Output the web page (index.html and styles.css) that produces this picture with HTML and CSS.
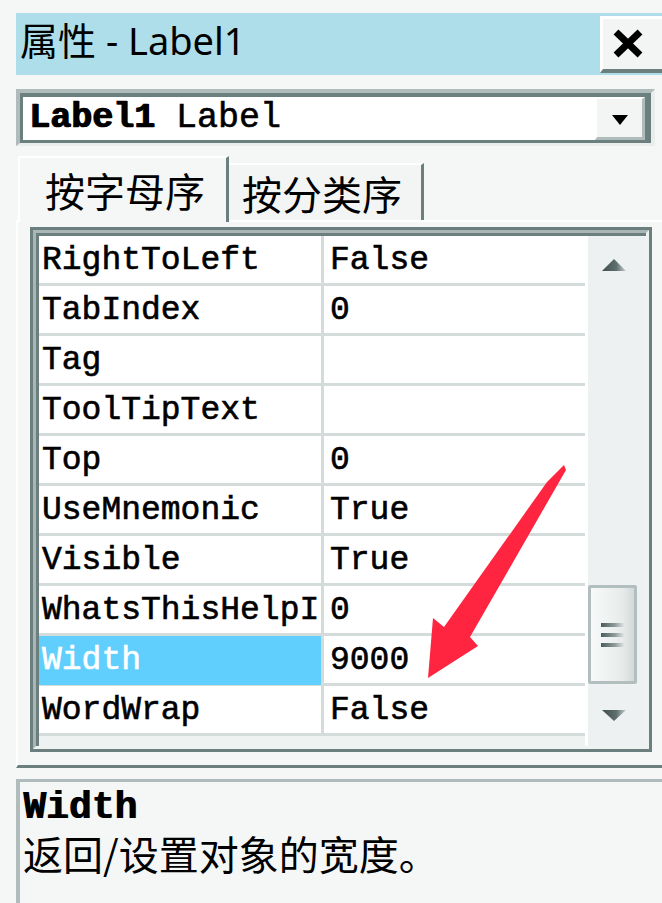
FILE: index.html
```html
<!DOCTYPE html>
<html>
<head>
<meta charset="utf-8">
<link rel="stylesheet" href="styles.css">
</head>
<body>
  <div class="window">
    <div class="titlebar">
      <span class="title">属性 - Label1</span>
      <div class="close">
        <svg width="32" height="31" viewBox="0 0 32 31"><path d="M4 4 L28 27 M28 4 L4 27" stroke="#000" stroke-width="7"/></svg>
      </div>
    </div>

    <div class="combo">
      <div class="combo-field">
        <span class="combo-text"><b>Label1</b> Label</span>
        <span class="combo-btn"><svg width="16" height="10" viewBox="0 0 16 10"><polygon points="0,0 16,0 8,10" fill="#000"/></svg></span>
      </div>
    </div>

    <div class="tabs">
      <div class="tab active">按字母序</div>
      <div class="tab">按分类序</div>
    </div>

    <div class="tabpage">
      <div class="grid-frame">
        <div class="grid-inner">
          <div class="rows">
            <div class="row"><div class="name">RightToLeft</div><div class="value">False</div></div>
            <div class="row"><div class="name">TabIndex</div><div class="value">0</div></div>
            <div class="row"><div class="name">Tag</div><div class="value"></div></div>
            <div class="row"><div class="name">ToolTipText</div><div class="value"></div></div>
            <div class="row"><div class="name">Top</div><div class="value">0</div></div>
            <div class="row"><div class="name">UseMnemonic</div><div class="value">True</div></div>
            <div class="row"><div class="name">Visible</div><div class="value">True</div></div>
            <div class="row"><div class="name">WhatsThisHelpID</div><div class="value">0</div></div>
            <div class="row selected"><div class="name">Width</div><div class="value">9000</div></div>
            <div class="row"><div class="name">WordWrap</div><div class="value">False</div></div>
          </div>
          <div class="scrollbar">
            <div class="sb-up">
              <svg width="24" height="12" viewBox="0 0 24 12"><polygon points="12,0 24,12 0,12" fill="url(#grey)"/></svg>
            </div>
            <div class="sb-space"></div>
            <div class="sb-thumb">
              <span class="grip"></span>
              <span class="grip"></span>
              <span class="grip"></span>
            </div>
            <div class="sb-down">
              <svg width="24" height="11" viewBox="0 0 24 11"><polygon points="0,0 24,0 12,11" fill="url(#grey)"/></svg>
            </div>
          </div>
        </div>
      </div>
    </div>

    <div class="desc">
      <div class="desc-title">Width</div>
      <div class="desc-text">返回/设置对象的宽度。</div>
    </div>
  </div>

  <!-- annotation drawn over the screenshot -->
  <svg class="annotation" width="662" height="903" viewBox="0 0 662 903">
    <defs>
      <linearGradient id="grey" x1="0" y1="0" x2="1" y2="0">
        <stop offset="0" stop-color="#3e4f4e"/>
        <stop offset="0.6" stop-color="#5e6f6e"/>
        <stop offset="1" stop-color="#c8d0cf"/>
      </linearGradient>
    </defs>
    <polygon points="564,465 547,482 444,627 433,618 428,678 478,646 470,637 566,470" fill="#ff2440"/>
  </svg>
</body>
</html>
```

FILE: styles.css
```css
body {
  margin: 0;
  width: 662px;
  height: 903px;
  overflow: hidden;
  position: relative;
  background: #f5f7f6;
  font-family: "Liberation Mono", monospace;
  color: #000;
}

.window {
  padding: 13px 0 0 16px;
}

/* title bar */
.titlebar {
  display: flex;
  height: 62px;
  background: #aedeea;
}

.title {
  padding-left: 4px;
  font-family: "Noto Sans", "Noto Sans CJK SC", sans-serif;
  font-size: 38px;
  line-height: 54px;
}

.close {
  margin-left: auto;
  margin-top: 3px;
  width: 62px;
  height: 57px;
  box-sizing: border-box;
  background: #f3f5f4;
  border-top: 3px solid #fff;
  border-left: 3px solid #fff;
  border-bottom: 4px solid #6a7f7e;
  padding: 9px 0 0 9px;
}

/* object combo */
.combo {
  margin-top: 14px;
  width: 639px;
  height: 57px;
  box-sizing: border-box;
  border-style: solid;
  border-width: 4px 4px 3px 4px;
  border-color: #b0bcbc #e9eeed #e9eeed #b0bcbc;
}

.combo-field {
  display: flex;
  height: 100%;
  box-sizing: border-box;
  background: #fff;
  border-style: solid;
  border-width: 4px 6px 3px 3px;
  border-color: #6a7f7e;
}

.combo-text {
  flex: 1;
  padding-left: 6px;
  font-size: 35px;
  line-height: 43px;
  white-space: pre;
  -webkit-text-stroke: 0.6px #000;
}

.combo-text b {
  text-shadow: 1px 0 0 #000;
}

.combo-btn {
  width: 50px;
  box-sizing: border-box;
  display: flex;
  align-items: center;
  justify-content: center;
  background: #f3f5f4;
  border-top: 2px solid #fff;
  border-left: 2px solid #fff;
  border-right: 3px solid #b0bcbc;
  border-bottom: 3px solid #b0bcbc;
  padding-top: 4px;
}

/* tabs */
.tabs {
  display: flex;
  align-items: flex-end;
  margin-top: 10px;
  height: 64px;
}

.tab {
  box-sizing: border-box;
  height: 57px;
  width: 195px;
  padding-left: 13px;
  font-family: "Noto Sans CJK SC", sans-serif;
  font-size: 40px;
  line-height: 57px;
  border-top: 2px solid #fff;
  border-right: 3px solid #6a7f7e;
  background: #f3f5f4;
}

.tab.active {
  position: relative;
  height: 66px;
  width: 211px;
  margin-left: 2px;
  margin-bottom: -2px;
  padding-left: 25px;
  line-height: 64px;
  border-left: 2px solid #fff;
  background: #f5f7f6;
}

/* tab page */
.tabpage {
  width: 700px;
  box-sizing: border-box;
  border-top: 2px solid #fff;
  border-left: 2px solid #fff;
  border-bottom: 3px solid #6a7f7e;
  padding: 5px 0 13px 12px;
}

.grid-frame {
  width: 622px;
  box-sizing: border-box;
  border: 3px solid #6a7f7e;
}

.grid-inner {
  display: flex;
  padding: 3px 0 0 3px;
  border-style: solid;
  border-width: 3px;
  border-color: #a9b6b5 #eef2f1 #eef2f1 #a9b6b5;
  box-shadow: inset 3px 3px 0 #6a7f7e;
  background: #eef2f1;
}

.rows {
  width: 546px;
  background: #fff;
  border-bottom: 10px solid #eef2f1;
}

.row {
  display: grid;
  grid-template-columns: 285px 1fr;
  height: 50px;
  box-sizing: border-box;
  border-bottom: 3px solid #d4dcdb;
  font-size: 33px;
  line-height: 49px;
  white-space: nowrap;
  -webkit-text-stroke: 0.6px currentColor;
}

.name {
  overflow: hidden;
  padding-left: 3px;
  border-right: 3px solid #d4dcdb;
}

.value {
  padding-left: 6px;
}

.row.selected .name {
  background: #60cffd;
  color: #fff;
}

/* scrollbar */
.scrollbar {
  flex: 1;
  display: flex;
  flex-direction: column;
  border-left: 3px solid #fff;
  background: #eef1f1;
}

.sb-up {
  height: 52px;
  display: flex;
  align-items: center;
  justify-content: center;
  padding-right: 6px;
  padding-top: 6px;
  box-sizing: border-box;
}

.sb-space {
  flex: 1;
}

.sb-thumb {
  height: 99px;
  width: 49px;
  box-sizing: border-box;
  border: 3px solid #b3bfbe;
  border-radius: 2px;
  background: linear-gradient(to right, #f8fafa, #e6ebea 75%, #d2d9d8);
  display: flex;
  flex-direction: column;
  align-items: center;
  justify-content: center;
  gap: 6px;
}

.grip {
  width: 23px;
  height: 4px;
  background: linear-gradient(to right, #4a5c5b, #8e9b9a 60%, #dfe5e4);
}

.sb-down {
  height: 62px;
  display: flex;
  align-items: center;
  justify-content: center;
  padding-right: 6px;
  box-sizing: border-box;
}

/* description */
.desc {
  margin-top: 11px;
  height: 140px;
  border-top: 3px solid #b0bcbc;
  border-left: 4px solid #b0bcbc;
  padding: 4px 0 0 3px;
}

.desc-title {
  font-size: 38px;
  font-weight: bold;
  line-height: 44px;
  text-shadow: 1px 0 0 #000;
}

.desc-text {
  font-family: "Noto Sans CJK SC", sans-serif;
  font-size: 40px;
  line-height: 46px;
}

.annotation {
  position: absolute;
  top: 0;
  left: 0;
  pointer-events: none;
}
```
